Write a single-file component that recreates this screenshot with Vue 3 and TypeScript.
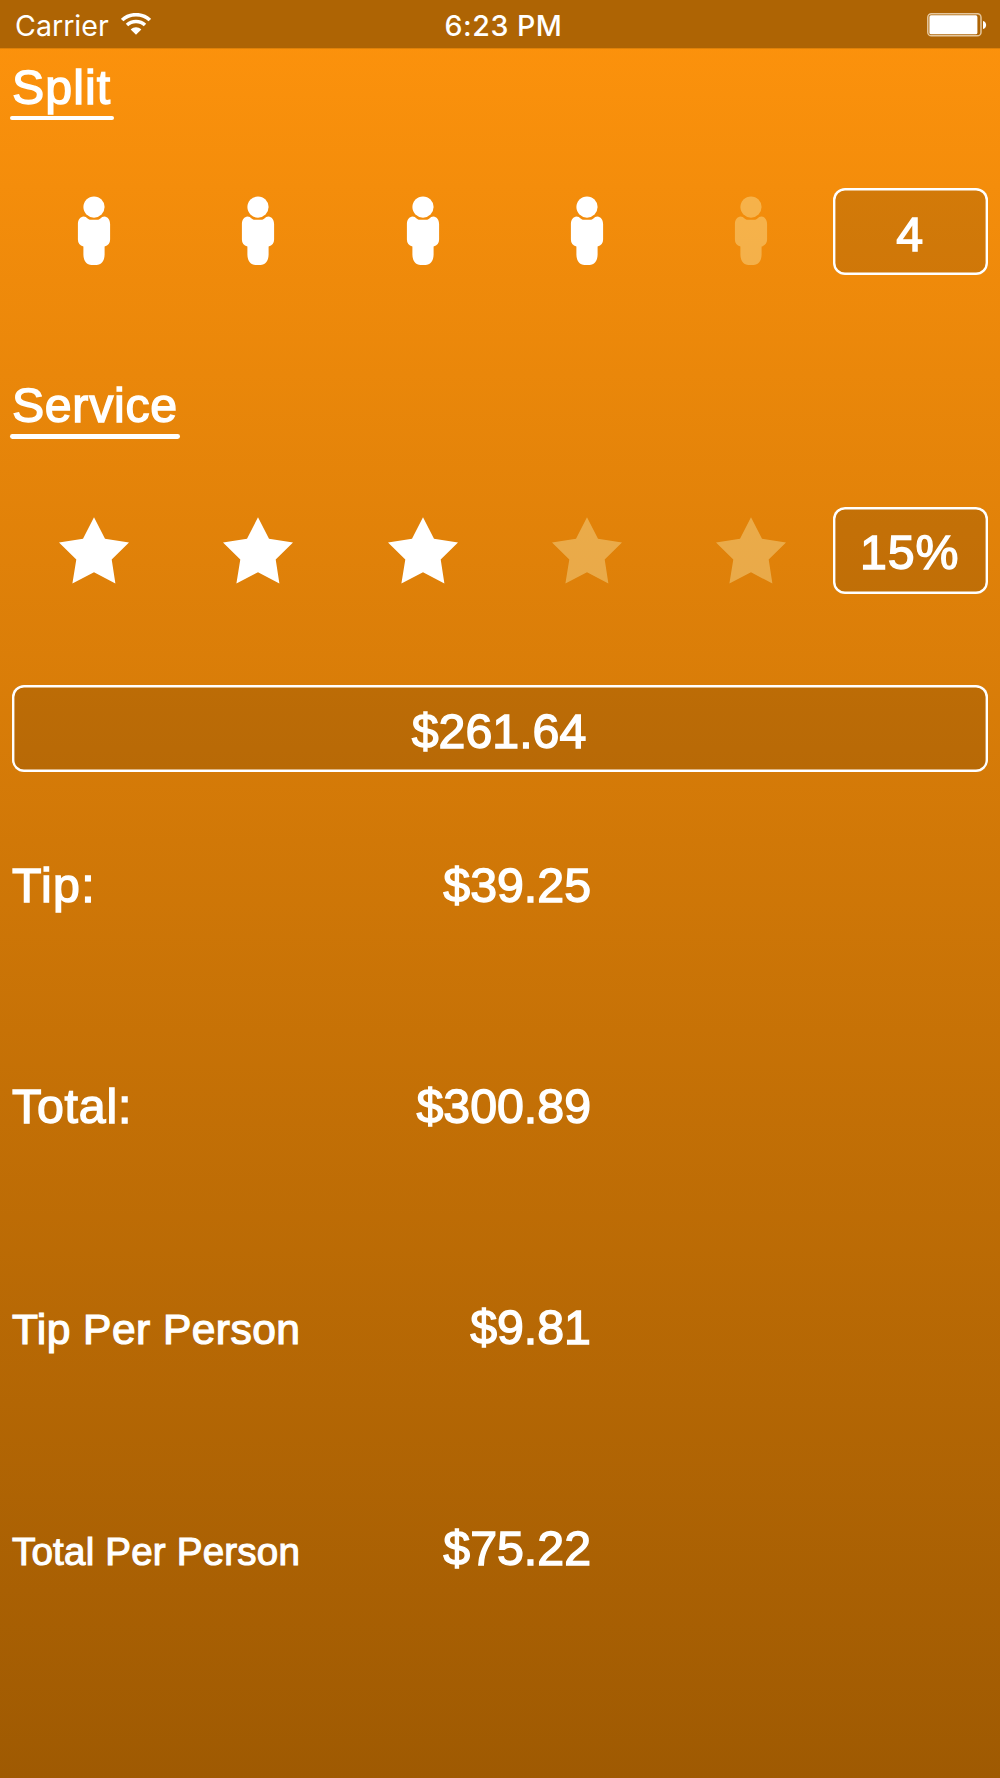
<script setup lang="ts">
interface ResultRow {
  label: string
  value: string
  kind: string
}

const people = 4
const stars = 3
const slots = [1, 2, 3, 4, 5]

const rows: ResultRow[] = [
  { label: 'Tip:', value: '$39.25', kind: 'tip' },
  { label: 'Total:', value: '$300.89', kind: 'total' },
  { label: 'Tip Per Person', value: '$9.81', kind: 'tip-person' },
  { label: 'Total Per Person', value: '$75.22', kind: 'total-person' },
]
</script>

<template>
  <main class="screen">
    <header class="status">
      <div class="carrier">
        <span>Carrier</span>
        <svg class="wifi" width="30" height="22" viewBox="0 0 30 22">
          <g fill="none" stroke="#fff">
            <path d="M1.2 7.1C8.6 -.2 21.4 -.2 28.8 7.1" stroke-width="3.5" />
            <path d="M6 12.1C10.9 7.3 19.1 7.3 24 12.1" stroke-width="3.5" />
          </g>
          <path d="M9.7 16.4C12.8 13.6 17.2 13.6 20.3 16.4L15 21.7Z" fill="#fff" />
        </svg>
      </div>
      <span class="clock">6:23 PM</span>
      <div class="battery">
        <svg width="60" height="24" viewBox="0 0 60 24">
          <rect x=".8" y=".8" width="53.2" height="22" rx="3.6" fill="none" stroke="#e5c79e" stroke-width="1.5" />
          <rect x="2.4" y="2.3" width="48" height="19" rx="1.6" fill="#fff" />
          <path d="M56 8C60.2 9 60.2 15 56 16Z" fill="#fff" />
        </svg>
      </div>
    </header>

    <section class="group split">
      <h2 class="heading"><span>Split</span></h2>
      <div class="picker">
        <button v-for="n in slots" :key="n" class="slot person" :class="{ off: n > people }">
          <svg width="34" height="70" viewBox="0 0 34 70">
            <circle cx="17" cy="11.1" r="10.6" />
            <path d="M6.5 20.4C8.4 20.4 9.3 21.3 10.6 22.4C11.6 23.3 12.4 23.7 14 23.7H20C21.6 23.7 22.4 23.3 23.4 22.4C24.7 21.3 25.6 20.4 27.5 20.4C30.6 20.6 33.1 23.6 33.1 28V43.4C33.1 46.8 31.2 49.3 27.6 50.6V58.5C27.6 65 24 69 19.4 69H14.6C10 69 6.4 65 6.4 58.5V50.6C2.8 49.3 .9 46.8 .9 43.4V28C.9 23.6 3.4 20.6 6.5 20.4Z" />
          </svg>
        </button>
        <div class="field"><span>{{ people }}</span></div>
      </div>
    </section>

    <section class="group service">
      <h2 class="heading"><span>Service</span></h2>
      <div class="picker">
        <button v-for="n in slots" :key="n" class="slot" :class="{ off: n > stars }">
          <svg width="70" height="67" viewBox="0 0 70 67">
            <path d="M35 .2L46 21.8L70 25.5L52.7 42.5L56.4 66.6L35 55.2L13.4 66.6L17.3 42.5L0 25.5L24 21.8Z" />
          </svg>
        </button>
        <div class="field"><span class="percent">15%</span></div>
      </div>
    </section>

    <div class="field amount"><span>$261.64</span></div>

    <section class="results">
      <div v-for="row in rows" :key="row.kind" class="row">
        <span class="label" :class="row.kind">{{ row.label }}</span>
        <span class="value">{{ row.value }}</span>
      </div>
    </section>
  </main>
</template>

<style>
body {
  margin: 0;
}
</style>

<style scoped>
.screen {
  box-sizing: border-box;
  width: 1000px;
  height: 1778px;
  overflow: hidden;
  display: flex;
  flex-direction: column;
  color: #fff;
  background: linear-gradient(#fe930c, #9f5a02);
  font-family: "Liberation Sans", Arial, sans-serif;
  font-size: 48.3px;
  -webkit-text-stroke: 1.4px #fff;
}
.status {
  box-sizing: border-box;
  flex: none;
  height: 48.3px;
  padding: 0 13px 0 15px;
  display: grid;
  grid-template-columns: 1fr auto 1fr;
  align-items: center;
  background: #ae6404;
  box-shadow: 0 1px 0 rgba(174, 100, 4, 0.35);
  font-family: Inter, sans-serif;
  font-size: 28.6px;
  line-height: 48px;
  -webkit-text-stroke: 0;
}
.carrier {
  display: flex;
  align-items: center;
  gap: 12px;
  padding-top: 3px;
  line-height: 45px;
}
.wifi {
  display: block;
  margin-top: -3px;
}
.clock {
  padding: 3px 0 0 5px;
  line-height: 45px;
  font-weight: 500;
  letter-spacing: 0.5px;
}
.battery {
  display: flex;
  justify-content: flex-end;
  padding-top: 2px;
}
.group {
  flex: none;
  padding: 0 12px 0 10px;
}
.split {
  padding-top: 9.3px;
  height: 318.4px;
  box-sizing: border-box;
}
.service {
  padding-top: 9.3px;
  height: 318.3px;
  box-sizing: border-box;
}
.heading {
  width: max-content;
  margin: 0;
  font-size: 48.3px;
  font-weight: 400;
  line-height: 58px;
}
.heading span {
  display: block;
  padding: 0 2.4px 0 1.9px;
}
.split .heading span {
  letter-spacing: 1.1px;
}
.service .heading span {
  letter-spacing: 0.7px;
}
.heading::after {
  content: "";
  display: block;
  height: 4.8px;
  border-radius: 2.4px;
  background: #fff;
}
.picker {
  display: flex;
  align-items: center;
  margin: 67.9px 0 0 2.1px;
}
.slot {
  flex: none;
  width: 164.25px;
  padding: 0;
  border: 0;
  background: none;
  display: flex;
  justify-content: center;
}
.person {
  padding-bottom: 2px;
}
.slot svg {
  display: block;
  fill: #fff;
}
.slot.off svg {
  fill: #ffffcb;
  opacity: 0.33;
}
.field {
  box-sizing: border-box;
  flex: 1;
  height: 87.2px;
  display: flex;
  align-items: center;
  justify-content: center;
  padding: 4px 2px 0 0;
  border-radius: 12px;
  background: rgba(0, 0, 0, 0.133);
  box-shadow: inset 0 0 0 2.4px #fff;
}
.percent {
  letter-spacing: 0.9px;
}
.amount {
  flex: none;
  margin: 0 12px;
}
.results {
  display: flex;
  flex-direction: column;
  padding: 2.4px 12px 0;
}
.row {
  height: 221.3px;
  display: grid;
  grid-template-columns: 287px 292px;
  align-items: baseline;
  line-height: 221.3px;
  white-space: nowrap;
}
.value {
  text-align: right;
}
.tip {
  letter-spacing: 1.3px;
}
.total {
  letter-spacing: 0.8px;
}
.tip-person {
  font-size: 42.6px;
  letter-spacing: 0.42px;
  -webkit-text-stroke-width: 1.2px;
}
.total-person {
  font-size: 38.6px;
  letter-spacing: 0.18px;
  -webkit-text-stroke-width: 1.1px;
}
</style>
